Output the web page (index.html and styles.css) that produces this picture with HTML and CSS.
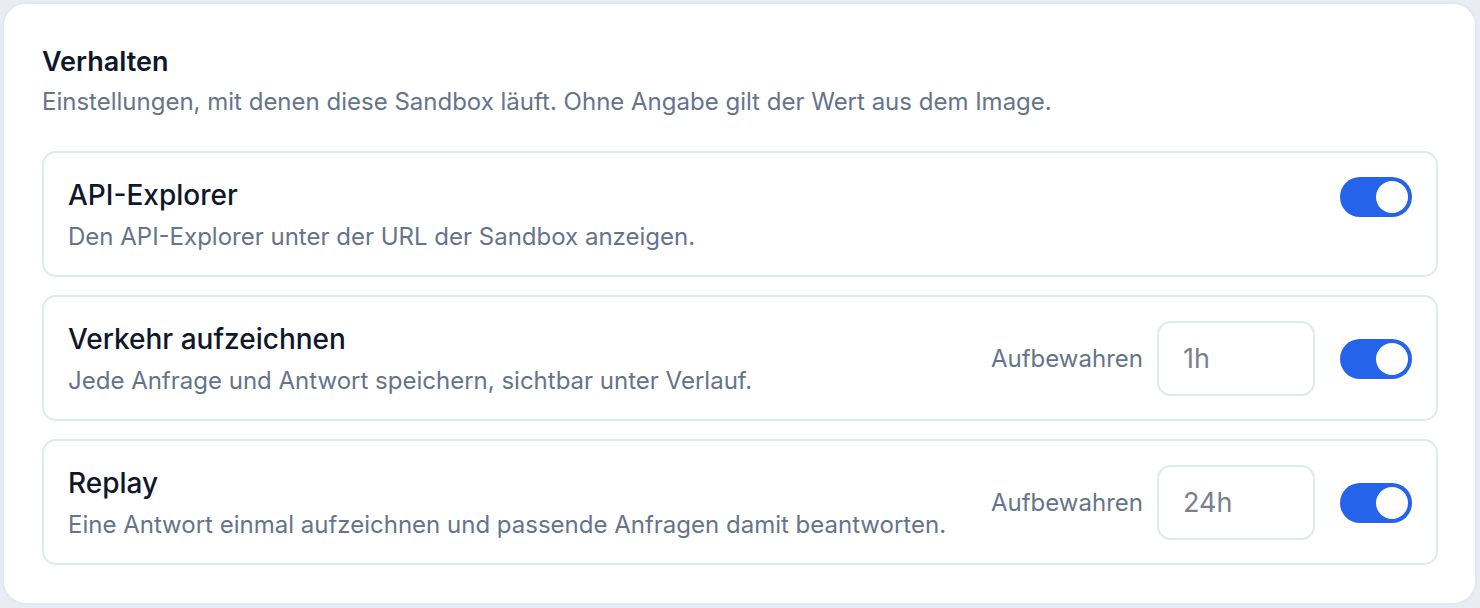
FILE: index.html
```html
<!DOCTYPE html>
<html lang="de">
<head>
<meta charset="utf-8">
<title>Verhalten</title>
<link rel="stylesheet" href="styles.css">
</head>
<body>
<section class="panel">
  <header class="panel-head">
    <h2 class="panel-title">Verhalten</h2>
    <p class="panel-desc">Einstellungen, mit denen diese Sandbox läuft. Ohne Angabe gilt der Wert aus dem Image.</p>
  </header>
  <div class="items">
    <div class="item">
      <div class="item-text">
        <div class="item-title">API-Explorer</div>
        <div class="item-desc">Den API-Explorer unter der URL der Sandbox anzeigen.</div>
      </div>
      <div class="controls">
        <button class="toggle on" type="button" aria-pressed="true"><span class="knob"></span></button>
      </div>
    </div>
    <div class="item">
      <div class="item-text">
        <div class="item-title">Verkehr aufzeichnen</div>
        <div class="item-desc">Jede Anfrage und Antwort speichern, sichtbar unter Verlauf.</div>
      </div>
      <div class="controls">
        <label class="field-label" for="keep1">Aufbewahren</label>
        <input class="field" id="keep1" type="text" placeholder="1h">
        <button class="toggle on" type="button" aria-pressed="true"><span class="knob"></span></button>
      </div>
    </div>
    <div class="item">
      <div class="item-text">
        <div class="item-title">Replay</div>
        <div class="item-desc">Eine Antwort einmal aufzeichnen und passende Anfragen damit beantworten.</div>
      </div>
      <div class="controls">
        <label class="field-label" for="keep2">Aufbewahren</label>
        <input class="field" id="keep2" type="text" placeholder="24h">
        <button class="toggle on" type="button" aria-pressed="true"><span class="knob"></span></button>
      </div>
    </div>
  </div>
</section>
</body>
</html>
```

FILE: styles.css
```css
* { box-sizing: border-box; }

html, body {
  margin: 0;
  padding: 0;
}

body {
  background: #e9edf3;
  font-family: Inter, "Noto Sans", "Liberation Sans", sans-serif;
  color: #0f172a;
  padding: 2px 3px 3px 2px;
}

.panel {
  background: #ffffff;
  border: 2px solid #e2e8f0;
  border-radius: 24px;
  padding: 40px 37px 38px 38px;
  height: 603px;
}

.panel-head {
  margin-bottom: 33px;
}

.panel-title {
  margin: 0;
  font-size: 27px;
  line-height: 36px;
  font-weight: 600;
  color: #0f172a;
}

.panel-desc {
  margin: 6px 0 0;
  font-size: 24px;
  line-height: 32px;
  color: #64748b;
}

.items {
  display: flex;
  flex-direction: column;
  gap: 18px;
}

.item {
  display: flex;
  align-items: flex-start;
  justify-content: space-between;
  gap: 24px;
  border: 2px solid #e2e8f0;
  border-radius: 14px;
  padding: 24px;
  height: 126px;
}

.item-text {
  display: flex;
  flex-direction: column;
  gap: 9px;
}

.item-title {
  font-size: 28px;
  line-height: 36px;
  font-weight: 500;
  color: #0f172a;
}

.item-desc {
  font-size: 24px;
  line-height: 30px;
  color: #64748b;
}

.controls {
  display: flex;
  align-items: center;
}

.field-label {
  font-size: 24px;
  color: #64748b;
  margin-right: 14px;
}

.field {
  width: 158px;
  height: 75px;
  border: 2px solid #e2e8f0;
  border-radius: 14px;
  padding: 0 24px;
  font-family: inherit;
  font-size: 27px;
  color: #0f172a;
  background: #ffffff;
  outline: none;
  margin-right: 25px;
}

.field::placeholder {
  color: #7b818c;
}

.toggle {
  position: relative;
  width: 72px;
  height: 40px;
  border: none;
  border-radius: 20px;
  background: #2563eb;
  padding: 0;
  cursor: pointer;
  flex: none;
}

.knob {
  position: absolute;
  top: 4px;
  right: 4px;
  width: 32px;
  height: 32px;
  border-radius: 50%;
  background: #ffffff;
}
```
